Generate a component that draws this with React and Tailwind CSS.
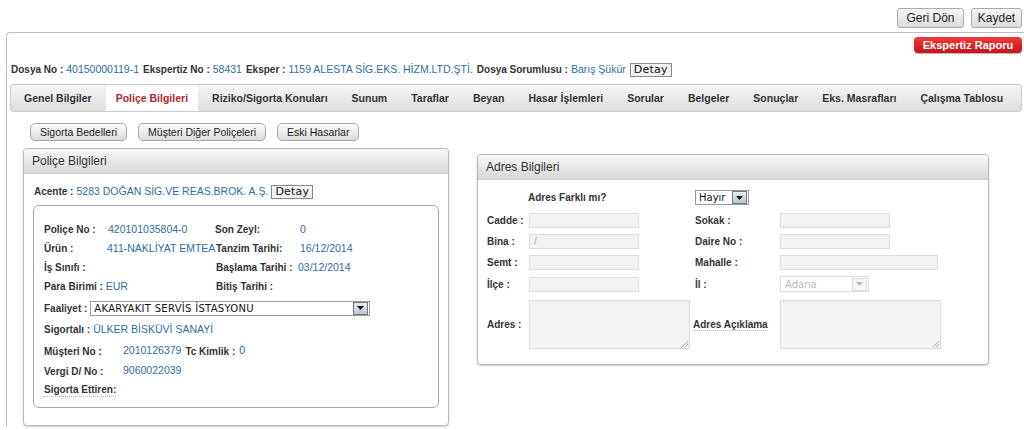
import React from 'react'

const lbl = "font-bold text-[#333] text-[10px]"
const val = "text-[#2e6da4] text-[10.5px]"

const GrayBtn = ({ children, className = "" }) => (
  <button className={"h-[18px] px-[9px] rounded-[5px] border border-[#a8a8a8] bg-gradient-to-b from-[#fafafa] to-[#dcdcdc] text-[10.5px] text-[#222] leading-none shadow-[inset_0_1px_0_#fff] " + className}>
    {children}
  </button>
)

const DetayBtn = () => (
  <button className="h-[14px] px-[3px] border border-[#888] bg-[#f2f2f2] text-[11px] text-[#111] leading-none font-['DejaVu_Sans',sans-serif] tracking-[0.2px]">
    Detay
  </button>
)

const Arrow = ({ faded }) => (
  <span className={"flex items-center justify-center w-[15px] h-[13px] border " + (faded ? "border-[#ddd] bg-[#f7f7f7]" : "border-[#777] bg-gradient-to-b from-[#e8eef3] to-[#b9c6d1]")}>
    <svg width="7" height="4" viewBox="0 0 7 4">
      <path d="M0 0h7L3.5 4z" fill={faded ? "#bbb" : "#111"} />
    </svg>
  </span>
)

const Input = ({ w = "w-[110px]", children }) => (
  <div className={"h-[15px] border border-[#dcdcdc] bg-[#f3f3f3] text-[10px] text-[#aaa] pl-[4px] leading-[13px] " + w}>{children}</div>
)

const Area = () => (
  <div className="relative w-[161px] h-[49px] border border-[#dcdcdc] bg-[#f3f3f3]">
    <svg className="absolute right-[1px] bottom-[1px]" width="7" height="7" viewBox="0 0 7 7">
      <path d="M7 1L1 7M7 4L4 7" stroke="#aaa" strokeWidth="1" />
    </svg>
  </div>
)

const tabs = ["Genel Bilgiler", "Poliçe Bilgileri", "Riziko/Sigorta Konuları", "Sunum", "Taraflar", "Beyan", "Hasar İşlemleri", "Sorular", "Belgeler", "Sonuçlar", "Eks. Masrafları", "Çalışma Tablosu"]

const Panel = ({ title, className = "", children }) => (
  <div className={"border border-[#b9b9b9] rounded-[4px] shadow-[0_1px_2px_rgba(0,0,0,0.2)] bg-white " + className}>
    <div className="h-[25px] flex items-center pl-[8px] rounded-t-[4px] border-b border-[#cfcfcf] bg-gradient-to-b from-[#f7f7f7] to-[#d8d8d8] text-[12px] text-[#333]">
      {title}
    </div>
    {children}
  </div>
)

export default function App() {
  return (
    <div className="w-[1024px] h-[430px] overflow-hidden bg-white font-['Liberation_Sans',Arial,sans-serif] text-[11px]">
      <div className="flex justify-end gap-[7px] pt-[8px] pr-[2px] h-[32px]">
        <button className="h-[20px] w-[67px] rounded-[3px] border border-[#aaa] bg-gradient-to-b from-[#f7f7f7] to-[#dcdcdc] text-[12px] text-[#222]">Geri Dön</button>
        <button className="h-[20px] w-[51px] rounded-[3px] border border-[#aaa] bg-gradient-to-b from-[#f7f7f7] to-[#dcdcdc] text-[12px] text-[#222]">Kaydet</button>
      </div>

      <div className="ml-[6px] border-t border-l border-[#bdbdbd] rounded-tl-[4px] pr-[2px]">
        <div className="flex justify-end pt-[4px]">
          <button className="h-[16px] w-[108px] rounded-[4px] bg-gradient-to-b from-[#f03a3a] to-[#c8101a] text-white font-bold text-[11px] leading-none shadow-[0_1px_1px_rgba(0,0,0,0.3)]">Ekspertiz Raporu</button>
        </div>

        <div className="flex items-center h-[15px] mt-[9px] pl-[4px] gap-[3px] whitespace-nowrap">
          <span className={lbl}>Dosya No :</span>
          <span className={val + " mr-[1px]"}>40150000119-1</span>
          <span className={lbl}>Ekspertiz No :</span>
          <span className={val + " mr-[1px]"}>58431</span>
          <span className={lbl}>Eksper :</span>
          <span className={val + " mr-[1px]"}>1159 ALESTA SİG.EKS. HİZM.LTD.ŞTİ.</span>
          <span className={lbl}>Dosya Sorumlusu :</span>
          <span className={val + " mr-[1px]"}>Barış Şükür</span>
          <DetayBtn />
        </div>

        <div className="mt-[7px] ml-[3px] h-[28px] flex items-end pl-[3px] gap-[4px] border border-[#c9c9c9] rounded-[3px] bg-gradient-to-b from-[#f6f6f6] to-[#dedede]">
          {tabs.map((t, i) => (
            <div key={t} className={"h-[25px] px-[10px] flex items-center font-bold text-[10.5px] whitespace-nowrap " + (i === 1 ? "bg-white text-[#b1262b] rounded-t-[3px]" : "text-[#333]")}>
              {t}
            </div>
          ))}
        </div>

        <div className="flex gap-[11px] pl-[23px] mt-[11px]">
          <GrayBtn>Sigorta Bedelleri</GrayBtn>
          <GrayBtn>Müşteri Diğer Poliçeleri</GrayBtn>
          <GrayBtn>Eski Hasarlar</GrayBtn>
        </div>

        <div className="flex items-start pl-[16px] mt-[7px] gap-[28px]">
          <Panel title="Poliçe Bilgileri" className="w-[426px] h-[278px]">
            <div className="flex items-center gap-[3px] pl-[10px] mt-[10px] h-[15px] whitespace-nowrap">
              <span className={lbl}>Acente :</span>
              <span className={val}>5283 DOĞAN SİG.VE REAS.BROK. A.Ş.</span>
              <DetayBtn />
            </div>
            <div className="mx-[9px] mt-[6px] h-[203px] border border-[#a9a9a9] rounded-[6px] pl-[10px] pt-[14px] whitespace-nowrap">
              <div className="flex items-center h-[19px]">
                <span className={lbl + " w-[64px]"}>Poliçe No :</span>
                <span className={val + " w-[107px]"}>420101035804-0</span>
                <span className={lbl + " w-[85px]"}>Son Zeyl:</span>
                <span className={val}>0</span>
              </div>
              <div className="flex items-center h-[19px]">
                <span className={lbl + " w-[63px]"}>Ürün :</span>
                <span className={val + " w-[109px]"}>411-NAKLİYAT EMTEA</span>
                <span className={lbl + " w-[84px]"}>Tanzim Tarihi:</span>
                <span className={val}>16/12/2014</span>
              </div>
              <div className="flex items-center h-[19px]">
                <span className={lbl + " w-[172px]"}>İş Sınıfı :</span>
                <span className={lbl + " w-[82px]"}>Başlama Tarihi :</span>
                <span className={val}>03/12/2014</span>
              </div>
              <div className="flex items-center h-[19px]">
                <span className={lbl + " w-[172px]"}>Para Birimi : <span className={val + " font-normal"}>EUR</span></span>
                <span className={lbl}>Bitiş Tarihi :</span>
              </div>
              <div className="flex items-center h-[22px] mt-[1px]">
                <span className={lbl + " mr-[3px]"}>Faaliyet :</span>
                <div className="flex items-center justify-between w-[280px] h-[15px] border border-[#999] pl-[3px] pr-[1px]">
                  <span className="font-['DejaVu_Sans',sans-serif] text-[10px] text-[#111] tracking-[0.3px]">AKARYAKIT SERVİS İSTASYONU</span>
                  <Arrow />
                </div>
              </div>
              <div className="flex items-center h-[21px]">
                <span className={lbl + " mr-[3px]"}>Sigortalı :</span>
                <span className={val}>ÜLKER BİSKÜVİ SANAYİ</span>
              </div>
              <div className="flex items-center h-[22px]">
                <span className={lbl + " w-[79px]"}>Müşteri No :</span>
                <span className={val + " mr-[4px]"}>2010126379</span>
                <span className={lbl + " mr-[4px]"}>Tc Kimlik :</span>
                <span className={val}>0</span>
              </div>
              <div className="flex items-center h-[18px]">
                <span className={lbl + " w-[79px]"}>Vergi D/ No :</span>
                <span className={val}>9060022039</span>
              </div>
              <div className="flex items-center h-[20px]">
                <span className={lbl + " border-b border-dotted border-[#bbb] leading-[13px]"}>Sigorta Ettiren:</span>
              </div>
            </div>
          </Panel>

          <Panel title="Adres Bilgileri" className="w-[512px] h-[211px] mt-[6px]">
            <div className="pl-[9px] pt-[8px] whitespace-nowrap">
              <div className="flex items-center h-[19px] mb-[3px]">
                <span className={lbl + " w-[208px] pl-[41px]"}>Adres Farklı mı?</span>
                <div className="flex items-center gap-[2px] h-[15px] border border-[#999] pl-[3px] pr-[1px] w-[54px]">
                  <span className="font-['DejaVu_Sans',sans-serif] text-[10px] text-[#111] mr-auto">Hayır</span>
                  <Arrow />
                </div>
              </div>
              {[
                ["Cadde :", "Sokak :", "w-[110px]", ""],
                ["Bina :", "Daire No :", "w-[110px]", "/"],
                ["Semt :", "Mahalle :", "w-[158px]", ""],
              ].map(([a, b, w2, v]) => (
                <div key={a} className="flex items-center h-[21px]">
                  <span className={lbl + " w-[42px]"}>{a}</span>
                  <Input>{v}</Input>
                  <span className={lbl + " w-[141px] pl-[56px]"}>{b}</span>
                  <Input w={w2} />
                </div>
              ))}
              <div className="flex items-center h-[22px]">
                <span className={lbl + " w-[42px]"}>İlçe :</span>
                <Input />
                <span className={lbl + " w-[141px] pl-[56px]"}>İl :</span>
                <div className="flex items-center w-[89px] h-[16px] border border-[#ddd] pl-[4px] pr-[1px]">
                  <span className="font-['DejaVu_Sans',sans-serif] text-[10px] text-[#bbb] mr-auto">Adana</span>
                  <Arrow faded />
                </div>
              </div>
              <div className="flex items-center h-[51px] mt-[4px]">
                <span className={lbl + " w-[42px]"}>Adres :</span>
                <Area />
                <span className={lbl + " w-[90px] pl-[3px]"}><span className="border-b border-dotted border-[#bbb]">Adres Açıklama</span></span>
                <Area />
              </div>
            </div>
          </Panel>
        </div>
      </div>
    </div>
  )
}
